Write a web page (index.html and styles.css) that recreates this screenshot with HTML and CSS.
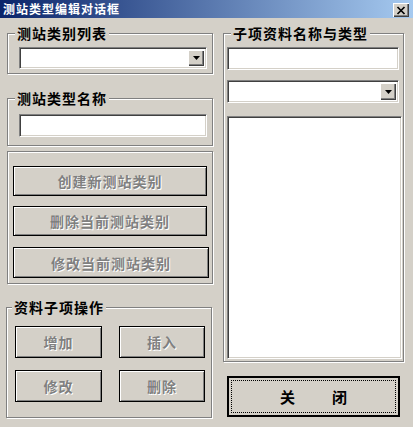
FILE: index.html
```html
<!DOCTYPE html>
<html lang="zh">
<head>
<meta charset="utf-8">
<link rel="stylesheet" href="styles.css">
</head>
<body>
<div class="window">
  <div class="titlebar">
    <span class="title">测站类型编辑对话框</span>
    <span class="xbtn"><svg width="10" height="9" viewBox="0 0 10 9"><path d="M1.5 1 L8.5 8 M8.5 1 L1.5 8" stroke="#000" stroke-width="1.7" fill="none"/></svg></span>
  </div>
  <div class="client">
    <div class="col-left">
      <div class="group g1">
        <span class="legend">测站类别列表</span>
        <div class="field combo c1"><span class="drop"><svg width="7" height="4" viewBox="0 0 7 4"><path d="M0 0 H7 L3.5 4 Z" fill="#000"/></svg></span></div>
      </div>
      <div class="group g2">
        <span class="legend">测站类型名称</span>
        <div class="field f1"></div>
      </div>
      <div class="group g3">
        <div class="btn b1">创建新测站类别</div>
        <div class="btn b2">删除当前测站类别</div>
        <div class="btn b3">修改当前测站类别</div>
      </div>
      <div class="group g4">
        <span class="legend l4">资料子项操作</span>
        <div class="grid">
          <div class="btn">增加</div>
          <div class="btn">插入</div>
          <div class="btn">修改</div>
          <div class="btn">删除</div>
        </div>
      </div>
    </div>
    <div class="col-right">
      <div class="group g5">
        <span class="legend">子项资料名称与类型</span>
        <div class="field f2"></div>
        <div class="field combo c2"><span class="drop"><svg width="7" height="4" viewBox="0 0 7 4"><path d="M0 0 H7 L3.5 4 Z" fill="#000"/></svg></span></div>
        <div class="field list"></div>
      </div>
      <div class="closebtn"><span>关</span><span>闭</span></div>
    </div>
  </div>
</div>
</body>
</html>
```

FILE: styles.css
```css
* { box-sizing: border-box; }
html, body { margin: 0; padding: 0; background: #d4d0c8; }
body { font-family: "Noto Sans CJK SC", "DejaVu Sans", sans-serif; }

.window {
  width: 413px;
  height: 427px;
  background: #d4d0c8;
  overflow: hidden;
}

.titlebar {
  height: 18px;
  background: linear-gradient(to right, #0a246a, #a6caf0);
  display: flex;
  align-items: center;
  justify-content: space-between;
  padding: 0 4px 0 3px;
}
.title {
  color: #fff;
  font-weight: bold;
  font-size: 12px;
  line-height: 14px;
  letter-spacing: 1px;
}
.xbtn {
  width: 16px;
  height: 14px;
  background: #d4d0c8;
  box-shadow: inset 1px 1px #fff, inset -1px -1px #404040, inset -2px -2px #808080;
  display: flex;
  align-items: center;
  justify-content: center;
  margin-top: 2px;
}

.client {
  display: flex;
  padding-left: 7px;
}
.col-left {
  width: 206px;
  padding-top: 15px;
  display: flex;
  flex-direction: column;
}
.col-right {
  width: 182px;
  margin-left: 10px;
  padding-top: 15px;
  display: flex;
  flex-direction: column;
}

.group {
  border: 1px solid #808080;
  box-shadow: inset 1px 1px #fff, 1px 1px #fff;
  display: flex;
  flex-direction: column;
  align-items: flex-start;
}
.legend {
  display: block;
  font-weight: bold;
  font-size: 14px;
  line-height: 14px;
  height: 14px;
  letter-spacing: 1px;
  color: #000;
  background: #d4d0c8;
  margin: -8px 0 0 7px;
  padding: 0 2px;
  white-space: nowrap;
}

.g1 { width: 206px; height: 41px; }
.g2 { width: 206px; height: 48px; margin-top: 24px; }
.g3 { width: 206px; height: 133px; margin-top: 5px; }
.g4 { width: 206px; height: 111px; margin-top: 23px; margin-left: -1px; }
.l4 { margin-left: 5px; }
.g5 { width: 181px; height: 329px; }

.field {
  background: #fff;
  border-top: 1px solid #808080;
  border-left: 1px solid #808080;
  border-bottom: 1px solid #fff;
  border-right: 1px solid #fff;
  box-shadow: inset 1px 1px #404040, inset -1px -1px #d4d0c8;
}
.combo {
  display: flex;
  justify-content: flex-end;
  align-items: stretch;
  padding: 2px;
}
.drop {
  width: 16px;
  background: #d4d0c8;
  box-shadow: inset 1px 1px #fff, inset -1px -1px #404040, inset -2px -2px #808080;
  display: flex;
  align-items: center;
  justify-content: center;
}
.c1 { margin: 7px 0 0 11px; width: 188px; height: 22px; }
.f1 { margin: 9px 0 0 11px; width: 188px; height: 23px; }
.f2 { margin: 7px 0 0 3px; width: 172px; height: 23px; }
.c2 { margin: 10px 0 0 3px; width: 172px; height: 23px; }
.list { margin: 13px 0 0 3px; width: 175px; height: 243px; }

.btn {
  border: 1px solid #000;
  box-shadow: inset 1px 1px #fff, inset -1px -1px #808080;
  background: #d4d0c8;
  color: #808080;
  text-shadow: 1px 1px 0 #fff;
  font-weight: bold;
  font-size: 14px;
  letter-spacing: 1px;
  display: flex;
  align-items: center;
  justify-content: center;
}
.b1 { margin: 14px 0 0 5px; width: 194px; height: 30px; }
.b2 { margin: 10px 0 0 5px; width: 194px; height: 30px; }
.b3 { margin: 11px 0 0 5px; width: 196px; height: 31px; }

.grid {
  display: grid;
  grid-template-columns: 87px 86px;
  grid-template-rows: 32px 32px;
  column-gap: 17px;
  row-gap: 12px;
  margin: 12px 0 0 8px;
}

.closebtn {
  margin: 14px 0 0 4px;
  width: 173px;
  height: 41px;
  border: 2px solid #000;
  background: #d4d0c8;
  outline: 1px dotted #000;
  outline-offset: -5px;
  display: flex;
  align-items: center;
  justify-content: center;
  gap: 37px;
  font-weight: bold;
  font-size: 15px;
  color: #000;
}
```
